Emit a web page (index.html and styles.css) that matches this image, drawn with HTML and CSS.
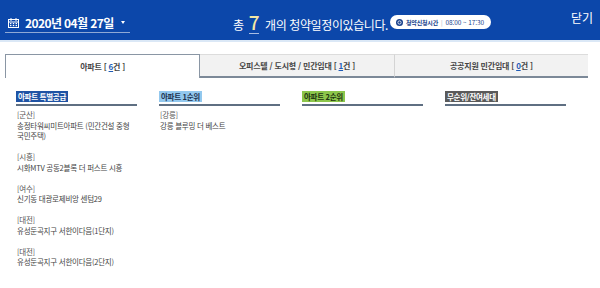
FILE: index.html
```html
<!DOCTYPE html>
<html lang="ko">
<head>
<meta charset="utf-8">
<link rel="stylesheet" href="styles.css">
</head>
<body>
<header class="top">
  <div class="date">
    <svg class="cal" width="11" height="10" viewBox="0 0 11 10">
      <rect x="0.5" y="1.5" width="10" height="8" fill="none" stroke="#fff" stroke-width="1"/>
      <line x1="3" y1="0" x2="3" y2="3" stroke="#fff" stroke-width="1"/>
      <line x1="8" y1="0" x2="8" y2="3" stroke="#fff" stroke-width="1"/>
      <line x1="0.5" y1="4" x2="10.5" y2="4" stroke="#fff" stroke-width="1"/>
      <rect x="2" y="5" width="1.4" height="1.2" fill="#fff"/>
      <rect x="4.8" y="5" width="1.4" height="1.2" fill="#fff"/>
      <rect x="7.6" y="5" width="1.4" height="1.2" fill="#fff"/>
      <rect x="2" y="7" width="1.4" height="1.2" fill="#fff"/>
      <rect x="4.8" y="7" width="1.4" height="1.2" fill="#fff"/>
      <rect x="7.6" y="7" width="1.4" height="1.2" fill="#fff"/>
    </svg>
    <span class="date-text">2020년 04월 27일</span>
    <span class="caret"></span>
  </div>
  <div class="summary"><span>총</span><span class="count">7</span><span>개의 청약일정이있습니다.</span></div>
  <div class="hours">
    <svg width="7" height="7" viewBox="0 0 7 7">
      <circle cx="3.5" cy="3.5" r="3.5" fill="#173f8c"/>
      <circle cx="3.5" cy="3.5" r="1.6" fill="none" stroke="#fff" stroke-width="0.8"/>
    </svg>
    <b>청약신청시간</b><span class="sep">|</span><span class="time">08:00 ~ 17:30</span>
  </div>
  <div class="close">닫기</div>
</header>

<nav class="tabs">
  <div class="tab active">아파트 [ <u>6</u>건 ]</div>
  <div class="tab">오피스텔 / 도시형 / 민간임대 [ <u>1</u>건 ]</div>
  <div class="tab">공공지원 민간임대 [ <u>0</u>건 ]</div>
</nav>

<section class="cols">
  <div class="col">
    <div class="col-head"><span class="tag tag-special">아파트 특별공급</span></div>
    <ul class="items">
      <li><span class="region">[군산]</span><span class="name">송정타워씨미트아파트 (민간건설 중형 국민주택)</span></li>
      <li><span class="region">[시흥]</span><span class="name">시화MTV 공동2블록 더 퍼스트 시흥</span></li>
      <li><span class="region">[여수]</span><span class="name">신기동 대광로제비앙 센텀29</span></li>
      <li><span class="region">[대전]</span><span class="name">유성둔곡지구 서한이다음(1단지)</span></li>
      <li><span class="region">[대전]</span><span class="name">유성둔곡지구 서한이다음(2단지)</span></li>
    </ul>
  </div>
  <div class="col">
    <div class="col-head"><span class="tag tag-first">아파트 1순위</span></div>
    <ul class="items">
      <li><span class="region">[강릉]</span><span class="name">강릉 블루밍 더 베스트</span></li>
    </ul>
  </div>
  <div class="col">
    <div class="col-head"><span class="tag tag-second">아파트 2순위</span></div>
  </div>
  <div class="col">
    <div class="col-head"><span class="tag tag-rest">무순위/잔여세대</span></div>
  </div>
</section>
</body>
</html>
```

FILE: styles.css
```css
* { box-sizing: border-box; }
html, body {
  margin: 0;
  padding: 0;
  background: #fff;
  font-family: "Noto Sans CJK KR", "Noto Sans", sans-serif;
  width: 600px;
  overflow: hidden;
}

.top {
  height: 42px;
  background: #0c47aa;
  border-bottom: 2px solid #dbe8f6;
  display: flex;
  align-items: center;
  padding: 0 7px 0 5px;
  color: #fff;
}
.top > * { flex-shrink: 0; }

.date {
  display: flex;
  align-items: center;
  width: 125px;
  height: 22px;
  padding: 2px 0 0 3px;
  border-bottom: 1px solid #8fa9d6;
  margin-top: 4px;
}
.cal { margin-right: 6px; }
.date-text {
  font-size: 12px;
  font-weight: 700;
  letter-spacing: -0.6px;
}
.caret {
  margin-left: 7px;
  width: 0; height: 0;
  border-left: 2.5px solid transparent;
  border-right: 2.5px solid transparent;
  border-top: 3px solid #fff;
}

.summary {
  margin-left: 103px;
  font-size: 12px;
  letter-spacing: -0.4px;
  display: flex;
  align-items: baseline;
  white-space: nowrap;
  margin-top: 4px;
}
.count {
  font-size: 19px;
  color: #f4e6a4;
  font-weight: 500;
  margin: 0 6px 0 5px;
  border-bottom: 1px solid #a9bde3;
  line-height: 22px;
}

.hours {
  margin-left: 2px;
  margin-top: 4px;
  height: 14px;
  padding: 0 7px 0 6px;
  background: #fff;
  border-radius: 7px;
  display: flex;
  align-items: center;
  color: #173f8c;
  font-size: 6px;
  white-space: nowrap;
}
.hours svg { margin-right: 3px; }
.hours b { font-weight: 700; letter-spacing: -0.2px; }
.hours .sep { color: #aab; margin: 0 3px; }
.hours .time { font-size: 6.5px; letter-spacing: -0.1px; }

.close {
  margin-left: auto;
  font-size: 12px;
  margin-top: -6px;
}

.tabs {
  display: flex;
  margin: 12px 12px 0 5px;
  height: 24px;
}
.tab {
  flex: 1;
  display: flex;
  align-items: center;
  justify-content: center;
  font-size: 8px;
  font-weight: 700;
  color: #444;
  background: #f2f2f2;
  border-top: 1px solid #dcdcdc;
  border-bottom: 2px solid #7c8998;
  letter-spacing: -0.2px;
  white-space: pre;
}
.tab + .tab { border-left: 1px solid #d4d4d4; }
.tab u { color: #1f5bb5; text-decoration: underline; }
.tab.active {
  background: #fff;
  border: 1px solid #8a96a4;
  border-bottom: none;
}
.tab.active + .tab { border-left: none; }

.cols {
  display: grid;
  grid-template-columns: repeat(4, 121px);
  column-gap: 22px;
  padding: 13px 0 0 16px;
  align-items: start;
}
.col-head {
  display: flex;
  border-bottom: 2px solid #5f6f82;
  padding-bottom: 2px;
}
.tag {
  display: block;
  font-size: 7.5px;
  font-weight: 700;
  line-height: 11px;
  height: 11px;
  padding: 0 2px;
  letter-spacing: -0.3px;
}
.tag-special { background: #1f53a4; color: #fff; }
.tag-first { background: #93c8ee; color: #1d3350; }
.tag-second { background: #8cc64b; color: #1f3510; }
.tag-rest { background: #5a5a5a; color: #fff; }

.items {
  list-style: none;
  margin: 0 -4px 0 0;
  padding: 4px 0 0 1px;
}
.items li {
  display: flex;
  flex-direction: column;
  font-size: 7.5px;
  line-height: 10.5px;
  letter-spacing: -0.25px;
  margin-bottom: 10.5px;
  word-break: keep-all;
}
.region { color: #555; }
.name { color: #444; }
```
